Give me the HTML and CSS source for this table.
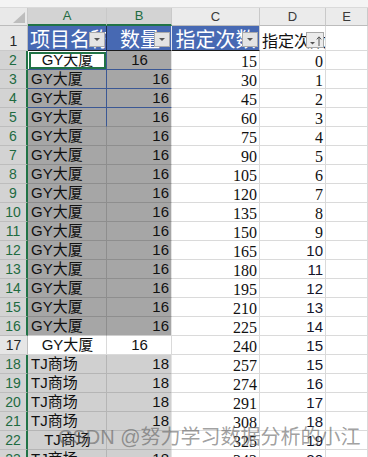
FILE: index.html
```html
<!DOCTYPE html>
<html lang="zh">
<head>
<meta charset="utf-8">
<title>sheet</title>
<link rel="stylesheet" href="styles.css">
</head>
<body>
<div class="sheet">
  <div class="top"></div>
  <div class="row hdr">
    <div class="corner"><svg width="12" height="11" viewBox="0 0 12 11"><polygon points="12,0 12,11 0,11" fill="#bdbdbd"/></svg></div>
    <div class="ch sel">A</div><div class="ch sel">B</div><div class="ch">C</div><div class="ch">D</div><div class="ch">E</div>
  </div>
  <div class="row r1">
    <div class="rh">1</div>
    <div class="c th ta">项目名称<span class="dd"><svg width="15" height="13" viewBox="0 0 15 13"><polygon points="4,5 10,5 7,8" fill="#555"/></svg></span></div>
    <div class="c th tb">数量<span class="dd"><svg width="15" height="13" viewBox="0 0 15 13"><polygon points="4,5 10,5 7,8" fill="#555"/></svg></span></div>
    <div class="c th tc">指定次数<span class="dd"><svg width="15" height="13" viewBox="0 0 15 13"><polygon points="4,5 10,5 7,8" fill="#555"/></svg></span></div>
    <div class="c td1">指定次数<span class="dd dd2"><svg width="16" height="14" viewBox="0 0 16 14"><polygon points="3,9 8,9 5.5,11.5" fill="#555"/><path d="M12 13V4M9.8 6.4L12 3.8L14.2 6.4" stroke="#555" stroke-width="1" fill="none"/></svg></span></div>
    <div class="c"></div>
  </div>
  <div class="row"><div class="rh s">2</div><div class="c ac m bl br">GY大厦</div><div class="c g b m bl">16</div><div class="c n ser">15</div><div class="c n ser">0</div><div class="c"></div></div>
  <div class="row"><div class="rh s">3</div><div class="c g bl br">GY大厦</div><div class="c g b n bl">16</div><div class="c n ser">30</div><div class="c n ser">1</div><div class="c"></div></div>
  <div class="row"><div class="rh s">4</div><div class="c g bl br">GY大厦</div><div class="c g b n bl">16</div><div class="c n ser">45</div><div class="c n ser">2</div><div class="c"></div></div>
  <div class="row"><div class="rh s">5</div><div class="c g br">GY大厦</div><div class="c g b n">16</div><div class="c n ser">60</div><div class="c n ser">3</div><div class="c"></div></div>
  <div class="row"><div class="rh s">6</div><div class="c g">GY大厦</div><div class="c g b n">16</div><div class="c n ser">75</div><div class="c n ser">4</div><div class="c"></div></div>
  <div class="row"><div class="rh s">7</div><div class="c g">GY大厦</div><div class="c g b n">16</div><div class="c n ser">90</div><div class="c n ser">5</div><div class="c"></div></div>
  <div class="row"><div class="rh s">8</div><div class="c g">GY大厦</div><div class="c g b n">16</div><div class="c n ser">105</div><div class="c n ser">6</div><div class="c"></div></div>
  <div class="row"><div class="rh s">9</div><div class="c g">GY大厦</div><div class="c g b n">16</div><div class="c n ser">120</div><div class="c n ser">7</div><div class="c"></div></div>
  <div class="row"><div class="rh s">10</div><div class="c g">GY大厦</div><div class="c g b n">16</div><div class="c n ser">135</div><div class="c n ser">8</div><div class="c"></div></div>
  <div class="row"><div class="rh s">11</div><div class="c g">GY大厦</div><div class="c g b n">16</div><div class="c n ser">150</div><div class="c n ser">9</div><div class="c"></div></div>
  <div class="row"><div class="rh s">12</div><div class="c g">GY大厦</div><div class="c g b n">16</div><div class="c n ser">165</div><div class="c n sn">10</div><div class="c"></div></div>
  <div class="row"><div class="rh s">13</div><div class="c g">GY大厦</div><div class="c g b n">16</div><div class="c n ser">180</div><div class="c n sn">11</div><div class="c"></div></div>
  <div class="row"><div class="rh s">14</div><div class="c g">GY大厦</div><div class="c g b n">16</div><div class="c n ser">195</div><div class="c n sn">12</div><div class="c"></div></div>
  <div class="row"><div class="rh s">15</div><div class="c g">GY大厦</div><div class="c g b n">16</div><div class="c n ser">210</div><div class="c n sn">13</div><div class="c"></div></div>
  <div class="row"><div class="rh s">16</div><div class="c g lb">GY大厦</div><div class="c g b n lb">16</div><div class="c n ser">225</div><div class="c n sn">14</div><div class="c"></div></div>
  <div class="row"><div class="rh">17</div><div class="c m">GY大厦</div><div class="c m">16</div><div class="c n ser">240</div><div class="c n sn">15</div><div class="c"></div></div>
  <div class="row"><div class="rh s">18</div><div class="c l">TJ商场</div><div class="c l b n">18</div><div class="c n ser">257</div><div class="c n sn">15</div><div class="c"></div></div>
  <div class="row"><div class="rh s">19</div><div class="c l">TJ商场</div><div class="c l b n">18</div><div class="c n ser">274</div><div class="c n sn">16</div><div class="c"></div></div>
  <div class="row"><div class="rh s">20</div><div class="c l">TJ商场</div><div class="c l b n">18</div><div class="c n ser">291</div><div class="c n sn">17</div><div class="c"></div></div>
  <div class="row"><div class="rh s">21</div><div class="c l">TJ商场</div><div class="c l b n">18</div><div class="c n ser">308</div><div class="c n sn">18</div><div class="c"></div></div>
  <div class="row"><div class="rh s">22</div><div class="c l m">TJ商场</div><div class="c l b n"></div><div class="c n ser">325</div><div class="c n sn">19</div><div class="c"></div></div>
  <div class="row"><div class="rh s">23</div><div class="c l">TJ商场</div><div class="c l b n">18</div><div class="c n ser">342</div><div class="c n sn">20</div><div class="c"></div></div>
</div>
<div class="wm">CSDN @努力学习数据分析的小江</div>
</body>
</html>
```

FILE: styles.css
```css
* { box-sizing: border-box; margin: 0; padding: 0; }
html, body { width: 368px; height: 457px; overflow: hidden; background: #fff; }
body { font-family: "Liberation Sans", "Noto Sans CJK SC", sans-serif; position: relative; }

.top { height: 8px; background: #f4f4f4; border-bottom: 1px solid #dadada; }

.row { display: grid; grid-template-columns: 28px 79px 65px 88px 66px 42px; height: 19px; }
.row.hdr { height: 18px; }
.row.r1 { height: 25px; }

.corner { position: relative; background: #e9e9e9; border-right: 1px solid #c9c9c9; border-bottom: 1px solid #bcbcbc; }
.corner svg { position: absolute; right: 2px; bottom: 2px; display: block; }

.ch { background: #ebebeb; border-right: 1px solid #c9c9c9; border-bottom: 1px solid #bcbcbc;
  font-size: 13px; line-height: 17px; text-align: center; color: #3a3a3a; }
.ch.sel { background: #d3d3d3; color: #1e6b41; border-bottom: 2px solid #217346; line-height: 16px; }

.rh { background: #e6e6e6; border-right: 1px solid #bdbdbd; border-bottom: 1px solid #cacaca;
  font-size: 14px; line-height: 18px; text-align: center; color: #262626; }
.rh.s { background: #d3d3d3; color: #1e6b41; border-right: 2px solid #217346; border-bottom-color: #bdbdbd; }
.r1 .rh { padding-top: 6px; }

.c { position: relative; border-right: 1px solid #dadada; border-bottom: 1px solid #dadada;
  font-size: 15px; line-height: 17px; padding: 0 2px 0 3px; white-space: nowrap; overflow: hidden; color: #111; }
.n { text-align: right; }
.m { text-align: center; }
.ser { font-family: "Liberation Serif", serif; font-size: 16px; line-height: 22px; color: #111; }
.sn { line-height: 20px; color: #14142a; }

.g { background: #a6a6a6; border-color: #8e8e8e; }
.l { background: #d0d0d0; border-color: #b5b5b5; }
.b { border-right-color: #e4e4e4; }
.bl { border-bottom-color: #3b5894; }
.br { border-right-color: #3b5894; }
.lb { border-bottom-color: #cfcfcf; }
.ac { background: #fff; outline: 2px solid #217346; outline-offset: -3px; }

.th { background: #4769b3; color: #fff; font-family: "Noto Sans CJK SC", sans-serif; font-size: 20px;
  line-height: 25px; text-align: center; padding: 0 0 0 2px; border-bottom: 1px solid #1c1c1c; }
.ta { border-right-color: #1f2f55; }
.tb { border-right-color: #e6e9f0; }
.tc { border-right-color: #d0d0d0; padding: 0; }
.td1 { font-family: "Noto Sans CJK SC", sans-serif; font-size: 16px; line-height: 22px; padding: 3px 0 0 2px; color: #111; }

.dd { position: absolute; right: 1px; bottom: 3px; width: 16px; height: 15px; background: #e4e4e4; border: 1px solid #aaaaaa; }
.dd svg { display: block; }
.dd2 { width: 18px; height: 16px; bottom: 2px; background: #ececec; border-color: #a8a8a8; }

.wm { position: absolute; left: 58px; top: 427px; font-family: "Liberation Sans", "Noto Sans CJK SC", sans-serif;
  font-size: 20px; line-height: 20px; color: rgba(100, 100, 100, 0.62); white-space: nowrap; }
```
